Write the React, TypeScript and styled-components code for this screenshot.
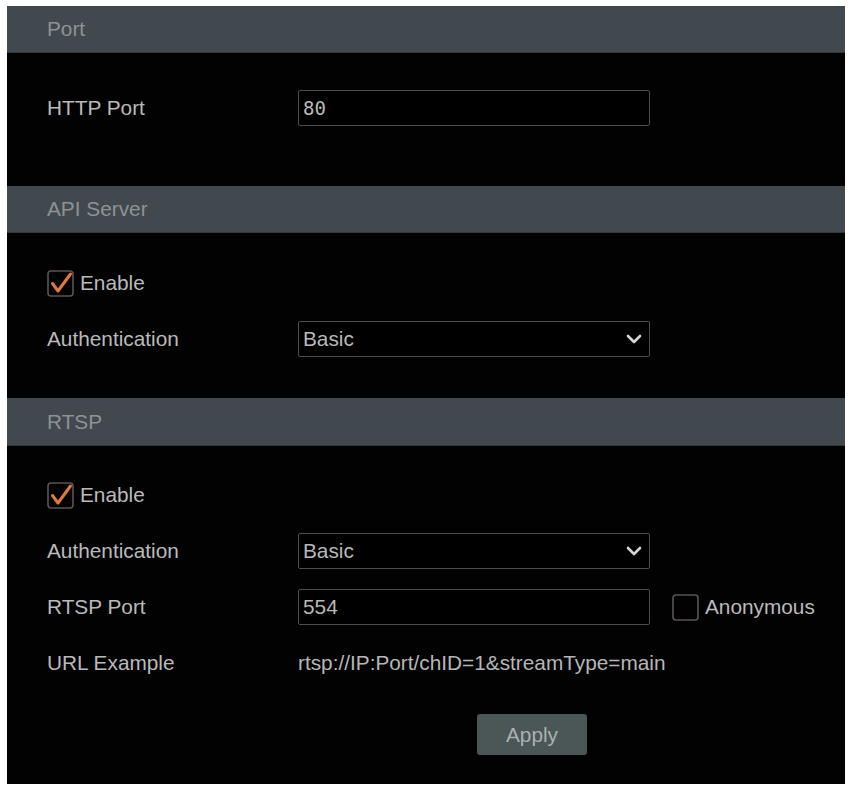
import React from "react";
import styled, { createGlobalStyle } from "styled-components";

const Global = createGlobalStyle`
  html, body { margin: 0; padding: 0; background: #ffffff; }
  body { font-family: "Liberation Sans", Arial, sans-serif; }
`;

const Panel = styled.div`
  margin: 6px 0 0 7px;
  width: 838px;
  height: 778px;
  background: #020203;
  display: flex;
  flex-direction: column;
  font-family: "Liberation Sans", Arial, sans-serif;
  font-size: 20.8px;
  overflow: hidden;
`;

const Header = styled.div<{ $h: number }>`
  height: ${(p) => p.$h}px;
  flex: none;
  background: #42494e;
  color: #8c9295;
  display: flex;
  align-items: center;
  padding-left: 40px;
  box-sizing: border-box;
  border-bottom: 1px solid #30363a;
`;

const Body = styled.div<{ $top: number; $bottom: number }>`
  display: flex;
  flex-direction: column;
  gap: 18px;
  padding: ${(p) => p.$top}px 0 ${(p) => p.$bottom}px 40px;
  flex: none;
`;

const Row = styled.div`
  display: grid;
  grid-template-columns: 251px 352px auto;
  align-items: center;
  height: 38px;
`;

const Label = styled.div`
  color: #bababa;
  white-space: nowrap;
`;

const Value = styled.div`
  color: #b6b6b6;
  white-space: nowrap;
`;

const Field = styled.div<{ $mono?: boolean }>`
  height: 36px;
  box-sizing: border-box;
  border: 1px solid #4d4d4d;
  border-radius: 2px;
  background: #000;
  color: #b8b8b8;
  display: flex;
  align-items: center;
  justify-content: space-between;
  padding: 0 7px 0 4px;
  font-family: ${(p) =>
    p.$mono ? '"DejaVu Sans Mono", "Liberation Mono", monospace' : '"Liberation Sans", Arial, sans-serif'};
  font-size: ${(p) => (p.$mono ? "19px" : "20.8px")};
`;

const CheckLine = styled.label`
  display: flex;
  align-items: center;
  gap: 6px;
  color: #bababa;
  white-space: nowrap;
`;

const AnonLine = styled(CheckLine)`
  margin-left: 22px;
`;

const ButtonRow = styled.div`
  display: flex;
  padding-left: 430px;
  margin-top: 14px;
`;

const Button = styled.button`
  width: 110px;
  height: 41px;
  border: none;
  border-radius: 3px;
  background: #4b5656;
  color: #a9b1b1;
  font-family: "Liberation Sans", Arial, sans-serif;
  font-size: 20.8px;
  padding: 0;
`;

const Box = ({ checked }: { checked: boolean }) => (
  <svg width="27" height="27" viewBox="0 0 27 27">
    <rect x="1" y="1" width="25" height="25" rx="3" fill="none" stroke="#5b5452" strokeWidth="1.6" />
    {checked && (
      <path
        d="M5.5 13.5 L11 21 L23.5 4"
        fill="none"
        stroke="#e07a3c"
        strokeWidth="3"
        strokeLinecap="round"
        strokeLinejoin="round"
      />
    )}
  </svg>
);

const Chevron = () => (
  <svg width="16" height="10" viewBox="0 0 16 10">
    <path d="M2 2 L8 8 L14 2" fill="none" stroke="#d6d6d6" strokeWidth="2.6" strokeLinecap="round" strokeLinejoin="round" />
  </svg>
);

export default function App() {
  return (
    <>
      <Global />
      <Panel>
        <Header $h={47}>Port</Header>
        <Body $top={36} $bottom={59}>
          <Row>
            <Label>HTTP Port</Label>
            <Field $mono>80</Field>
          </Row>
        </Body>

        <Header $h={47}>API Server</Header>
        <Body $top={31} $bottom={40}>
          <Row>
            <CheckLine>
              <Box checked />
              Enable
            </CheckLine>
          </Row>
          <Row>
            <Label>Authentication</Label>
            <Field>
              Basic
              <Chevron />
            </Field>
          </Row>
        </Body>

        <Header $h={48}>RTSP</Header>
        <Body $top={30} $bottom={29}>
          <Row>
            <CheckLine>
              <Box checked />
              Enable
            </CheckLine>
          </Row>
          <Row>
            <Label>Authentication</Label>
            <Field>
              Basic
              <Chevron />
            </Field>
          </Row>
          <Row>
            <Label>RTSP Port</Label>
            <Field>554</Field>
            <AnonLine>
              <Box checked={false} />
              Anonymous
            </AnonLine>
          </Row>
          <Row>
            <Label>URL Example</Label>
            <Value>rtsp://IP:Port/chID=1&amp;streamType=main</Value>
          </Row>
          <ButtonRow>
            <Button>Apply</Button>
          </ButtonRow>
        </Body>
      </Panel>
    </>
  );
}
